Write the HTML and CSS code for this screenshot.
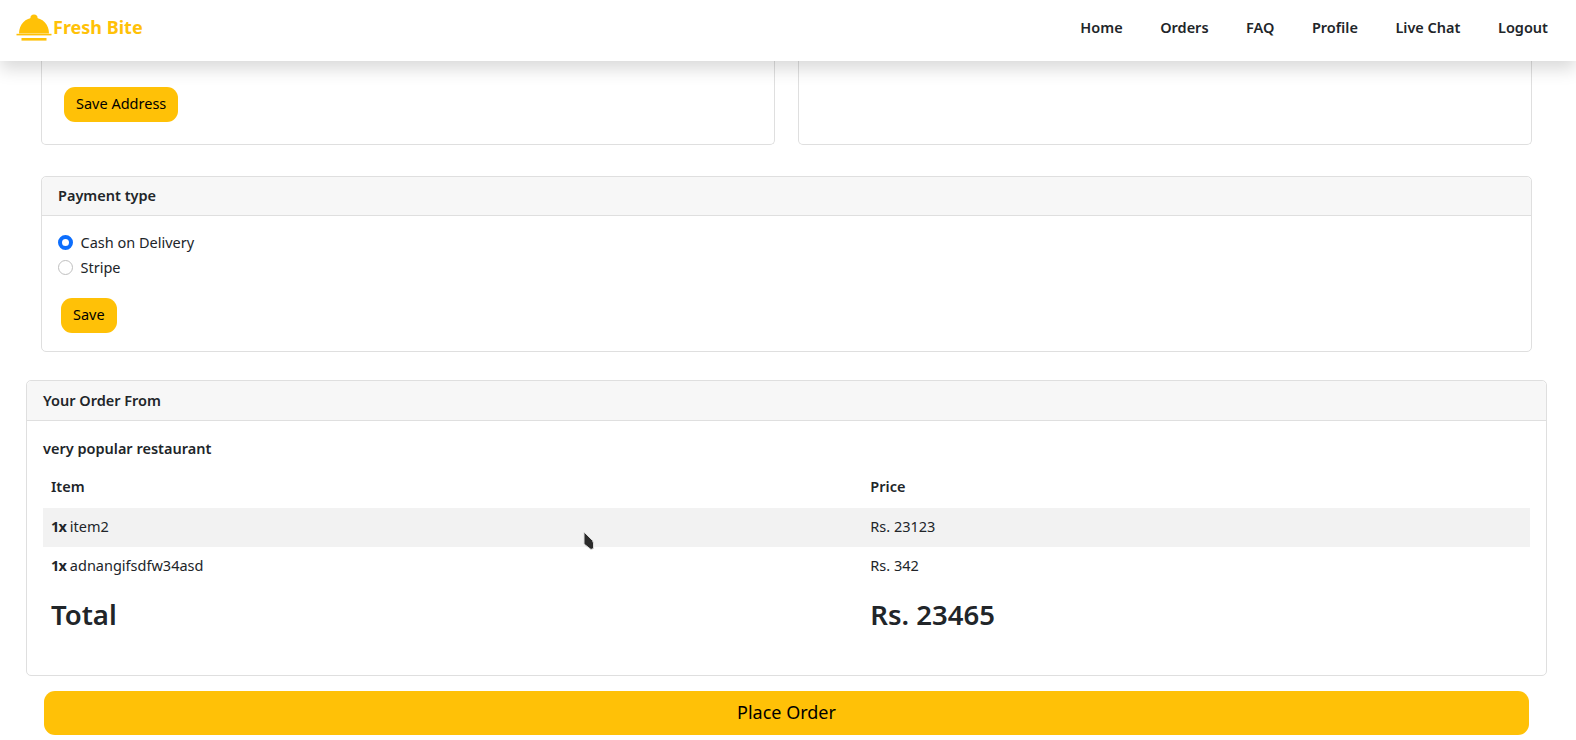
FILE: index.html
```html
<!DOCTYPE html>
<html lang="en">
    <head>
        <meta charset="UTF-8" />
        <title>Fresh Bite</title>
        <link rel="stylesheet" href="styles.css">
    </head>
    <body>
        <nav class="navbar">
            <a class="brand" href="#">
                <svg class="brand-icon" xmlns="http://www.w3.org/2000/svg" width="36" height="28" viewBox="0 0 36 28">
                    <circle cx="18" cy="4" r="3.6" fill="#ffc107" />
                    <path fill="#ffc107" d="M3 19.5C3 10.5 9.5 3.8 18 3.8s15 6.7 15 15.7z" />
                    <rect x="0.5" y="19.8" width="35" height="1.6" fill="#ffc107" />
                    <rect x="5.5" y="24" width="25" height="2.6" fill="#ffc107" />
                </svg>
                <span>Fresh Bite</span>
            </a>
            <ul class="nav-links">
                <li><a href="#">Home</a></li>
                <li><a href="#">Orders</a></li>
                <li><a href="#">FAQ</a></li>
                <li><a href="#">Profile</a></li>
                <li><a href="#">Live Chat</a></li>
                <li><a href="#">Logout</a></li>
            </ul>
        </nav>

        <main class="page">
            <!-- address cards, scrolled under the navbar -->
            <div class="address-row">
                <div class="card address-card">
                    <button class="btn">Save Address</button>
                </div>
                <div class="card address-card"></div>
            </div>

            <div class="card payment-card">
                <div class="card-header">Payment type</div>
                <div class="card-body payment-body">
                    <label class="radio"><span class="dot checked"></span>Cash on Delivery</label>
                    <label class="radio"><span class="dot"></span>Stripe</label>
                    <button class="btn save-btn">Save</button>
                </div>
            </div>

            <div class="card order-card">
                <div class="card-header order-header">Your Order From</div>
                <div class="card-body order-body">
                    <div class="restaurant">very popular restaurant</div>
                    <table class="order-table">
                        <thead>
                            <tr><th class="col-item">Item</th><th>Price</th></tr>
                        </thead>
                        <tbody>
                            <tr class="striped"><td><b>1x</b> item2</td><td>Rs. 23123</td></tr>
                            <tr><td><b>1x</b> adnangifsdfw34asd</td><td>Rs. 342</td></tr>
                            <tr class="total"><td>Total</td><td>Rs. 23465</td></tr>
                        </tbody>
                    </table>
                </div>
            </div>

            <button class="btn place-order">Place Order</button>
        </main>

        <!-- mouse pointer caught in the screenshot -->
        <svg class="cursor" xmlns="http://www.w3.org/2000/svg" width="12" height="20" viewBox="0 0 12 20">
            <path d="M1 1L9.5 9.5L10.5 12V17.5L8 18.5L1 13z" fill="#2b2b2b" stroke="#ddd" stroke-width="1" />
        </svg>
    </body>
</html>
```

FILE: styles.css
```css
* {
    box-sizing: border-box;
}
body {
    margin: 0;
    height: 740px;
    overflow: hidden;
    background: white;
    color: #212529;
    font-family: "Noto Sans", sans-serif;
    font-size: 14.5px;
    line-height: 1.5;
}
.navbar {
    position: relative;
    z-index: 2;
    height: 61px;
    display: flex;
    justify-content: space-between;
    align-items: center;
    padding: 0 28px 6px 16px;
    background: white;
    box-shadow: 0 8px 16px rgba(0, 0, 0, 0.15);
}
.brand {
    display: flex;
    align-items: center;
    gap: 1px;
    color: #ffc107;
    font-size: 18px;
    font-weight: 700;
    text-decoration: none;
}
.nav-links {
    display: flex;
    gap: 37.5px;
    margin: 0;
    padding: 0;
    list-style: none;
}
.nav-links a {
    color: #212529;
    font-weight: 600;
    text-decoration: none;
}
.page {
    padding: 0 29px 0 26px;
}
.card {
    border: 1px solid #dfdfdf;
    border-radius: 5px;
    background: white;
}
.card-header {
    height: 39px;
    padding: 0 16px 1px;
    display: flex;
    align-items: center;
    font-weight: 600;
    background: #f7f7f7;
    border-bottom: 1px solid #dfdfdf;
    border-radius: 5px 5px 0 0;
}
.order-header {
    height: 40px;
    padding-bottom: 0;
}
.card-body {
    padding: 16px;
}
.address-row {
    display: flex;
    gap: 23px;
    padding: 0 15px;
}
.address-card {
    flex: 1;
    height: 84px;
    padding: 26px 22px;
    border-top: 0;
    border-radius: 0 0 5px 5px;
}
.btn {
    display: block;
    height: 35px;
    padding: 0 12px 3px;
    border: 0;
    border-radius: 11px;
    background: #ffc107;
    color: black;
    font-family: inherit;
    font-size: 14.5px;
}
.payment-card {
    margin: 31px 15px 0;
    height: 176px;
}
.payment-body {
    padding-top: 14px;
}
.radio {
    display: flex;
    align-items: center;
    gap: 7.5px;
    height: 25px;
}
.dot {
    width: 15px;
    height: 15px;
    border: 1px solid #bfbfbf;
    border-radius: 50%;
}
.dot.checked {
    border: 4px solid #0d6efd;
}
.save-btn {
    margin: 18px 0 0 3px;
}
.order-card {
    margin-top: 28px;
    height: 296px;
}
.order-body {
    padding-top: 17px;
}
.restaurant {
    font-weight: 600;
}
.order-table {
    width: 100%;
    margin-top: 7px;
    border-collapse: collapse;
}
.order-table th,
.order-table td {
    height: 39px;
    padding: 0 8px;
    text-align: left;
}
.order-table th {
    height: 41px;
    font-weight: 600;
}
.col-item {
    width: 55.1%;
}
.order-table b {
    font-weight: 700;
    letter-spacing: -0.8px;
}
.striped {
    background: #f2f2f2;
}
.order-table .total td {
    height: 56px;
    padding-top: 1px;
    font-size: 27.5px;
    font-weight: 600;
}
.place-order {
    width: 1485px;
    height: 44px;
    margin: 15px 0 0 18px;
    font-size: 18px;
}
.cursor {
    position: absolute;
    left: 583px;
    top: 531px;
}
```
